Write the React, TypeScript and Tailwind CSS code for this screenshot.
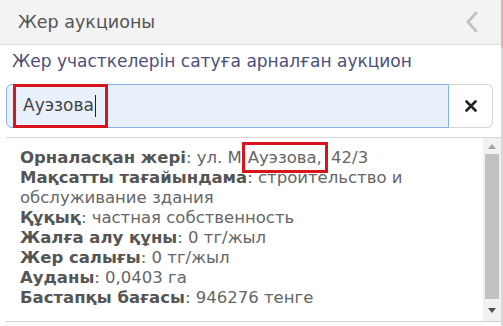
import React from "react";

const rows: { label: string; value: React.ReactNode }[] = [
  {
    label: "Орналасқан жері",
    value: (
      <>
        : ул. М
        <span className="relative ml-[3px] mr-[1px] px-[3px] py-[3px] outline-[3px] outline-[#d9141c] outline">Ауэзова,</span> 42/3
      </>
    ),
  },
  { label: "Мақсатты тағайындама", value: ": строительство и обслуживание здания" },
  { label: "Құқық", value: ": частная собственность" },
  { label: "Жалға алу құны", value: ": 0 тг/жыл" },
  { label: "Жер салығы", value: ": 0 тг/жыл" },
  { label: "Ауданы", value: ": 0,0403 га" },
  { label: "Бастапқы бағасы", value: ": 946276 тенге" },
];

export default function App() {
  return (
    <div className="relative flex h-[326px] w-[503px] overflow-hidden bg-white font-['DejaVu_Sans',sans-serif]">
      <div className="flex w-[501px] flex-col">
        {/* header */}
        <div className="flex h-[45px] shrink-0 items-center justify-between border-b border-[#dcdcdc] bg-[#f3f3f3] pl-[18px] pr-[22px]">
          <span className="text-[17.5px] text-[#555]">Жер аукционы</span>
          <svg width="14" height="22" viewBox="0 0 14 22" fill="none">
            <path d="M11 2 L3 11 L11 20" stroke="#c4c4c4" strokeWidth="3" strokeLinecap="round" strokeLinejoin="round" />
          </svg>
        </div>

        <div className="pl-[12px] pt-[5px] text-[17px] leading-[22px] text-[#4b4f7a]">
          Жер участкелерін сатуға арналған аукцион
        </div>

        {/* search */}
        <div className="ml-[6px] mr-[8px] mt-[12px] flex h-[44px]">
          <div className="relative flex flex-1 items-center rounded-l-[6px] border border-[#86b3e6] bg-[#e8f0fc] pl-[16px]">
            <span className="text-[17px] text-[#444]">Ауэзова</span>
            <span className="ml-[1px] h-[22px] w-[1px] bg-[#222]" />
            <div className="absolute left-[6px] top-[-1px] h-[44px] w-[95px] border-[3px] border-[#d9141c]" />
          </div>
          <div className="flex w-[44px] items-center justify-center rounded-r-[6px] border border-l-0 border-[#d4d4d4] bg-white">
            <svg width="12" height="12" viewBox="0 0 12 12">
              <path d="M1.5 1.5 L10.5 10.5 M10.5 1.5 L1.5 10.5" stroke="#222" strokeWidth="2.6" strokeLinecap="round" />
            </svg>
          </div>
        </div>

        {/* dropdown */}
        <div className="ml-[6px] mt-[9px] flex h-[185px] border-t border-[#d6d6d6] border-b border-b-[#cfcfcf]">
          <div className="flex-1 pl-[14px] pt-[10px] text-[16.5px] leading-[20px] text-[#666]">
            {rows.map((r) => (
              <div key={r.label}>
                <b className="font-bold text-[#555]">{r.label}</b>
                {r.value}
              </div>
            ))}
          </div>
          <div className="flex w-[18px] flex-col items-center bg-[#f1f1f1]">
            <div className="flex h-[16px] items-center justify-center">
              <svg width="8" height="5" viewBox="0 0 8 5"><path d="M0 5 L4 0 L8 5Z" fill="#a3a3a3" /></svg>
            </div>
            <div className="w-[14px] flex-1 bg-[#c1c1c1]" />
            <div className="flex h-[22px] items-center justify-center">
              <svg width="8" height="5" viewBox="0 0 8 5"><path d="M0 0 L4 5 L8 0Z" fill="#505050" /></svg>
            </div>
          </div>
        </div>
      </div>
      <div className="flex w-[2px] flex-col">
        <div className="h-[48px] bg-[#d9b3b3]" />
        <div className="flex-1 bg-[#d8d8d8]" />
      </div>
    </div>
  );
}
